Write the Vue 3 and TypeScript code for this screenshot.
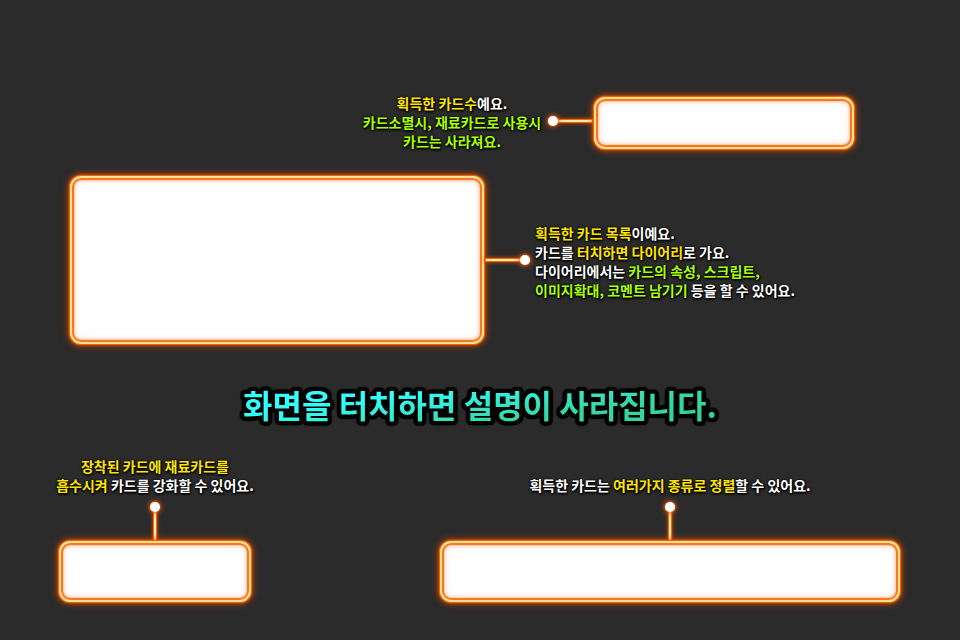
<script setup lang="ts">
type Tone = 'white' | 'yellow' | 'lime'

interface Segment {
  text: string
  tone: Tone
}

type Line = Segment[]

const white = (text: string): Segment => ({ text, tone: 'white' })
const yellow = (text: string): Segment => ({ text, tone: 'yellow' })
const lime = (text: string): Segment => ({ text, tone: 'lime' })

const countLines: Line[] = [
  [yellow('획득한 카드수'), white('예요.')],
  [lime('카드소멸시, 재료카드로 사용시')],
  [lime('카드는 사라져요.')],
]

const listLines: Line[] = [
  [yellow('획득한 카드 목록'), white('이예요.')],
  [white('카드를 '), yellow('터치하면 다이어리'), white('로 가요.')],
  [white('다이어리에서는 '), lime('카드의 속성, 스크립트,')],
  [lime('이미지확대, 코멘트 남기기'), white(' 등을 할 수 있어요.')],
]

const upgradeLines: Line[] = [
  [yellow('장착된 카드에 재료카드를')],
  [yellow('흡수시켜'), white(' 카드를 강화할 수 있어요.')],
]

const sortLines: Line[] = [
  [white('획득한 카드는 '), yellow('여러가지 종류로 정렬'), white('할 수 있어요.')],
]

const title = '화면을 터치하면 설명이 사라집니다.'
</script>

<template>
  <main class="guide">
    <section class="row row-count">
      <p class="note centered">
        <span v-for="(line, i) in countLines" :key="i" class="line">
          <span v-for="(part, j) in line" :key="j" :class="part.tone">{{ part.text }}</span>
        </span>
      </p>
      <div class="connector raised"><i class="dot"></i><i class="stem"></i></div>
      <div class="frame short"></div>
    </section>

    <section class="row row-list">
      <div class="frame tall"></div>
      <div class="connector"><i class="stem"></i><i class="dot"></i></div>
      <p class="note">
        <span v-for="(line, i) in listLines" :key="i" class="line">
          <span v-for="(part, j) in line" :key="j" :class="part.tone">{{ part.text }}</span>
        </span>
      </p>
    </section>

    <h1 class="title" :data-outline="title"><span class="title-fill">{{ title }}</span></h1>

    <section class="row row-bottom">
      <div class="stack stack-upgrade">
        <p class="note centered">
          <span v-for="(line, i) in upgradeLines" :key="i" class="line">
            <span v-for="(part, j) in line" :key="j" :class="part.tone">{{ part.text }}</span>
          </span>
        </p>
        <div class="connector vertical"><i class="dot"></i><i class="stem"></i></div>
        <div class="frame medium"></div>
      </div>
      <div class="stack stack-sort">
        <p class="note centered">
          <span v-for="(line, i) in sortLines" :key="i" class="line">
            <span v-for="(part, j) in line" :key="j" :class="part.tone">{{ part.text }}</span>
          </span>
        </p>
        <div class="connector vertical"><i class="dot"></i><i class="stem"></i></div>
        <div class="frame medium"></div>
      </div>
    </section>
  </main>
</template>

<style>
body {
  margin: 0;
  background: #2b2b2b;
}
</style>

<style scoped>
.guide {
  box-sizing: border-box;
  min-height: 100vh;
  padding-top: 94px;
  overflow: hidden;
  background: #2b2b2b;
  font-family: "Noto Sans CJK KR", "Noto Sans", sans-serif;
  font-weight: 700;
}

.row {
  display: grid;
  align-items: center;
}

.row-count {
  grid-template-columns: 362fr 180fr 52fr 260fr 106fr;
}

.row-count .note {
  grid-column: 2;
}

.row-list {
  grid-template-columns: 70fr 414fr 51fr 425fr;
  margin-top: 25px;
}

.row-list .frame {
  grid-column: 2;
}

.row-list .note {
  padding-top: 4px;
}

.row-bottom {
  grid-template-columns: 59fr 192fr 189fr 460fr 60fr;
  align-items: end;
  margin-top: 29px;
}

.stack {
  display: flex;
  flex-direction: column;
  align-items: center;
  min-width: 0;
}

.stack-upgrade {
  grid-column: 2;
}

.stack-sort {
  grid-column: 4;
}

.note {
  display: flex;
  flex-direction: column;
  margin: 0;
  font-size: 14px;
  line-height: 19px;
  white-space: pre;
  text-shadow: 0 0 2px #000, 1px 1px 2px #000, 0 1px 3px #000;
}

.centered {
  align-items: center;
}

.line {
  display: block;
}

.white {
  color: #fff;
}

.yellow {
  color: #ffe400;
}

.lime {
  color: #a8ff00;
}

.frame {
  box-sizing: border-box;
  align-self: stretch;
  border: 2px solid #ffdf96;
  border-radius: 11px;
  background: #fff;
  box-shadow:
    0 0 1px 1px #f06a00,
    0 0 3px 1px #e85000,
    0 0 7px 2px rgba(240, 80, 0, 0.6),
    inset 0 0 0 2px #f57a1a,
    inset 0 0 3px 2px #ff9a70,
    inset 0 0 6px 3px #ffe0d6;
}

.row .short {
  height: 52px;
  align-self: center;
}

.tall {
  height: 168px;
}

.medium {
  height: 61px;
}

.connector {
  display: flex;
  align-items: center;
  padding: 0 2px 0 6px;
}

.raised {
  padding-bottom: 3px;
}

.row-list .connector {
  padding: 0 5px 0 2px;
}

.dot {
  position: relative;
  z-index: 1;
  flex: none;
  width: 10px;
  height: 10px;
  border-radius: 50%;
  background: #fff;
  box-shadow: 0 0 2px #ff7a1a, 0 0 5px 1px #e85000;
}

.stem {
  flex: 1;
  height: 2px;
  background: #ffeab0;
  box-shadow: 0 0 1px 1px #ff6c08, 0 0 4px 1px #d84800;
}

.stack .vertical {
  box-sizing: border-box;
  flex-direction: column;
  height: 46px;
  padding: 7px 0 1px;
}

.vertical .stem {
  width: 2px;
  height: auto;
}

.title {
  position: relative;
  z-index: 0;
  width: max-content;
  margin: 36px auto 0;
  font-size: 32px;
  line-height: 48px;
  white-space: nowrap;
}

.title::before {
  content: attr(data-outline);
  position: absolute;
  inset: 0;
  z-index: -1;
  color: #000;
  text-shadow:
    4px 0 1px #000, -4px 0 1px #000, 0 4px 1px #000, 0 -4px 1px #000,
    4px 2px 1px #000, -4px 2px 1px #000, 4px -2px 1px #000, -4px -2px 1px #000,
    2px 4px 1px #000, -2px 4px 1px #000, 2px -4px 1px #000, -2px -4px 1px #000,
    3px 3px 1px #000, -3px 3px 1px #000, 3px -3px 1px #000, -3px -3px 1px #000,
    2px 0 1px #000, -2px 0 1px #000, 0 2px 1px #000, 0 -2px 1px #000;
}

.title-fill {
  display: block;
  background: linear-gradient(172deg, #33ffff 30%, #36d8a8 66%, #2fd08e 100%);
  -webkit-background-clip: text;
  background-clip: text;
  color: transparent;
}
</style>
